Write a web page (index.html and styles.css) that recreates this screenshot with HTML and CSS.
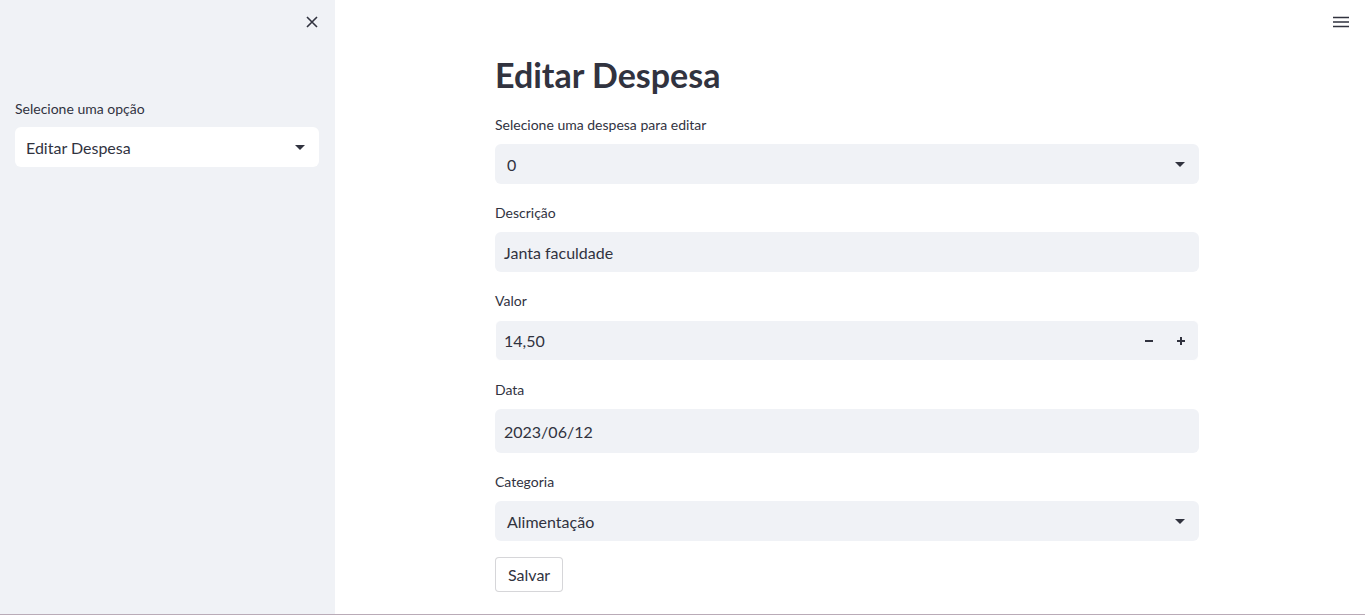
FILE: index.html
```html
<!DOCTYPE html>
<html lang="pt">
<head>
<meta charset="utf-8">
<title>Editar Despesa</title>
<link rel="stylesheet" href="styles.css">
</head>
<body>
<div class="app">
  <aside class="sidebar">
    <div class="sidebar-top">
      <button class="icon-btn" aria-label="Fechar">
        <svg width="14" height="14" viewBox="0 0 14 14"><path d="M2 2 L12 12 M12 2 L2 12" stroke="#31333f" stroke-width="1.6" fill="none"/></svg>
      </button>
    </div>
    <div class="widget">
      <label class="label">Selecione uma opção</label>
      <div class="select select-white">
        <span>Editar Despesa</span>
        <span class="caret"></span>
      </div>
    </div>
  </aside>
  <main class="main">
    <header class="topbar">
      <button class="icon-btn" aria-label="Menu">
        <svg width="16" height="12" viewBox="0 0 16 12"><path d="M0 1.5 H16 M0 6 H16 M0 10.5 H16" stroke="#31333f" stroke-width="1.6" fill="none"/></svg>
      </button>
    </header>
    <div class="content">
      <h1 class="title">Editar Despesa</h1>
      <div class="widget">
        <label class="label">Selecione uma despesa para editar</label>
        <div class="select"><span>0</span><span class="caret"></span></div>
      </div>
      <div class="widget">
        <label class="label">Descrição</label>
        <div class="input">Janta faculdade</div>
      </div>
      <div class="widget">
        <label class="label">Valor</label>
        <div class="input number">
          <span>14,50</span>
          <span class="steps">
            <span class="step"><svg width="10" height="10" viewBox="0 0 10 10"><path d="M1 5 H9" stroke="#31333f" stroke-width="2"/></svg></span>
            <span class="step"><svg width="10" height="10" viewBox="0 0 10 10"><path d="M1 5 H9 M5 1 V9" stroke="#31333f" stroke-width="2"/></svg></span>
          </span>
        </div>
      </div>
      <div class="widget">
        <label class="label">Data</label>
        <div class="input date">2023/06/12</div>
      </div>
      <div class="widget">
        <label class="label">Categoria</label>
        <div class="select"><span>Alimentação</span><span class="caret"></span></div>
      </div>
      <div class="actions">
        <button class="btn">Salvar</button>
      </div>
    </div>
  </main>
</div>
</body>
</html>
```
FILE: styles.css
```css
* { box-sizing: border-box; }
html, body { margin: 0; padding: 0; }
body {
  font-family: "Lato", "Liberation Sans", sans-serif;
  color: #31333f;
  background: #fff;
}
.app {
  display: flex;
  height: 615px;
  border-bottom: 1px solid #b9abb7;
  overflow: hidden;
}
.sidebar {
  width: 335px;
  flex: 0 0 335px;
  background: #f0f2f6;
  padding: 0 16px 0 15px;
  display: flex;
  flex-direction: column;
}
.sidebar-top {
  height: 96px;
  display: flex;
  justify-content: flex-end;
  align-items: flex-start;
  padding-top: 15px;
}
.icon-btn {
  background: none;
  border: 0;
  padding: 0;
  width: 14px;
  height: 14px;
  display: flex;
  align-items: center;
  justify-content: center;
  cursor: pointer;
}
.main {
  flex: 1;
  display: flex;
  flex-direction: column;
  padding: 0 166px 0 160px;
}
.topbar {
  position: absolute;
  top: 16px;
  right: 16px;
}
.topbar .icon-btn { width: 16px; height: 12px; }
.content {
  width: 704px;
  display: flex;
  flex-direction: column;
  gap: 16px;
  padding-top: 56px;
}
.title {
  margin: 0;
  font-size: 34px;
  line-height: 38px;
  font-weight: 700;
  height: 40px;
}
.widget {
  display: flex;
  flex-direction: column;
  gap: 8px;
}
.sidebar .widget { gap: 7px; }
.label {
  height: 24px;
  display: flex;
  align-items: center;
  font-size: 14px;
}
.select, .input {
  height: 40px;
  background: #f0f2f6;
  border-radius: 6px;
  display: flex;
  align-items: center;
  font-size: 16px;
}
.select {
  justify-content: space-between;
  padding: 0 14px 0 12px;
}
.select-white { background: #fff; padding-left: 11px; }
.caret {
  width: 0;
  height: 0;
  border-left: 5px solid transparent;
  border-right: 5px solid transparent;
  border-top: 5px solid #31333f;
}
.input { padding: 0 9px; }
.number {
  height: 41px;
  border: 1px solid #fff;
  padding-left: 8px;
  justify-content: space-between;
  padding-right: 12px;
}
.steps { display: flex; gap: 22px; }
.step { display: flex; align-items: center; }
.date { height: 44px; }
.btn {
  height: 35px;
  padding: 0 12px;
  font-family: inherit;
  font-size: 16px;
  color: #31333f;
  background: #fff;
  border: 1px solid rgba(49, 51, 63, 0.2);
  border-radius: 4px;
}
```
